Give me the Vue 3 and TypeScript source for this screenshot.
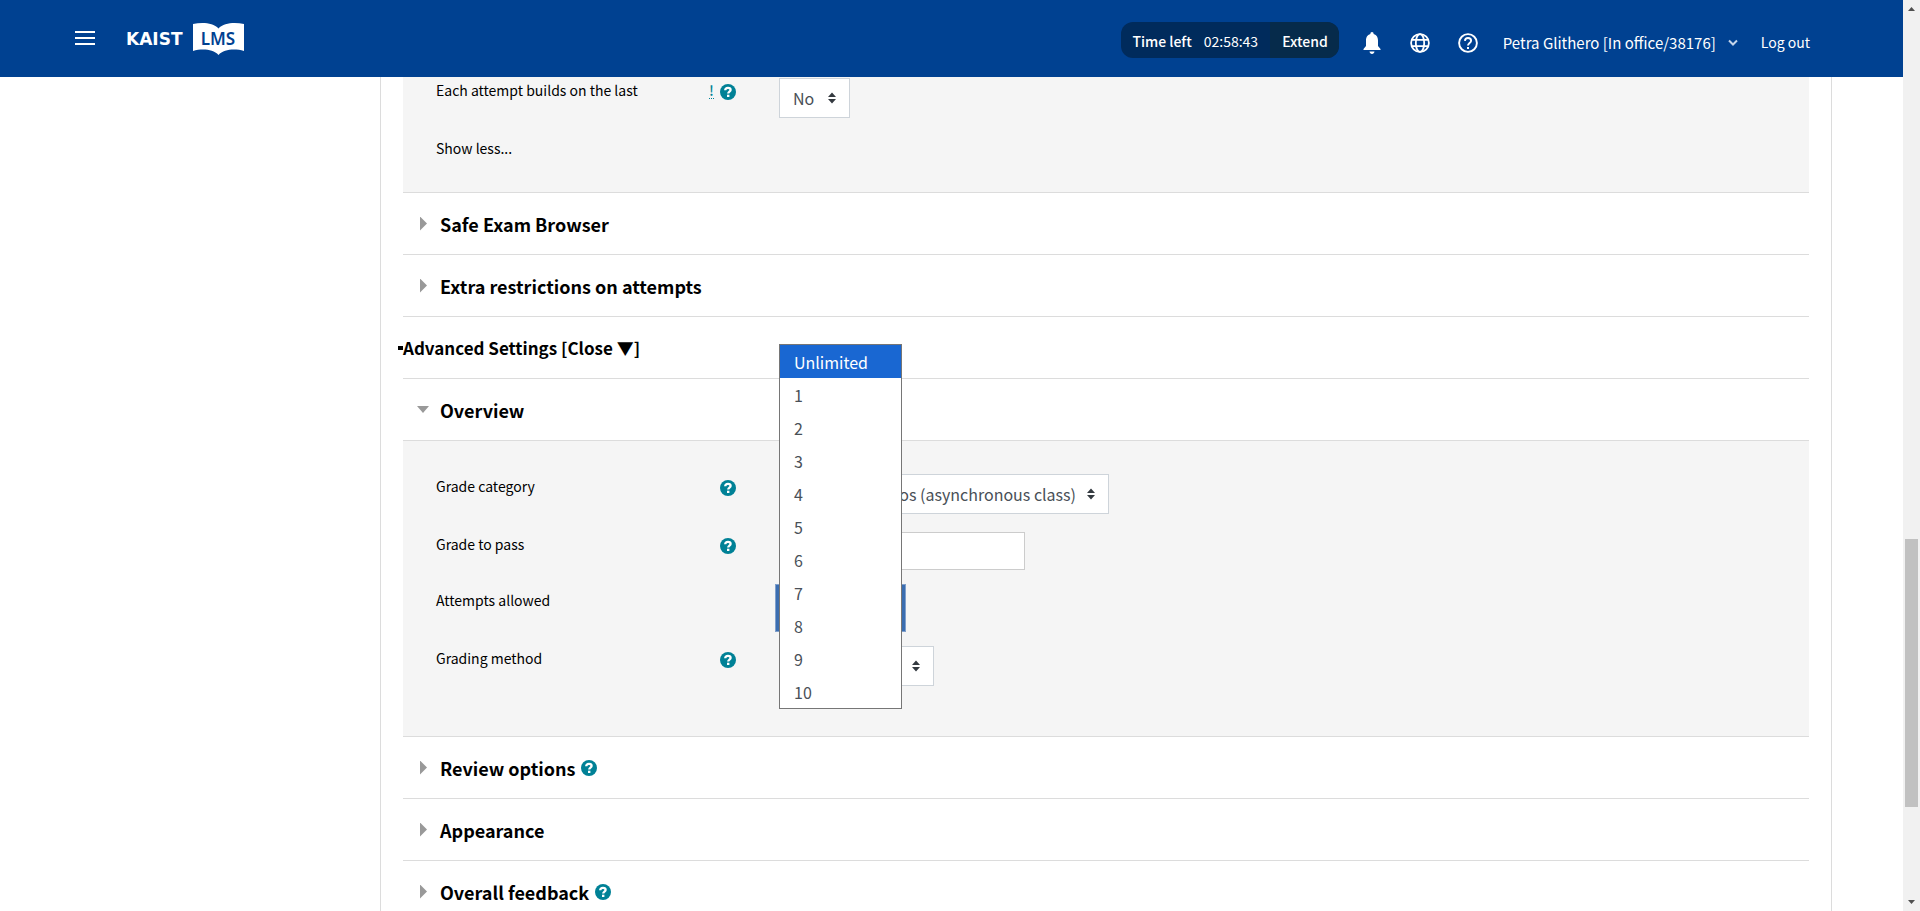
<script setup lang="ts">
import { ref } from 'vue'

interface Section {
  title: string
  help: boolean
}

const upperSections: Section[] = [
  { title: 'Safe Exam Browser', help: false },
  { title: 'Extra restrictions on attempts', help: false },
]
const lowerSections: Section[] = [
  { title: 'Review options', help: true },
  { title: 'Appearance', help: false },
  { title: 'Overall feedback', help: true },
]

const attemptOptions: string[] = ['Unlimited', '1', '2', '3', '4', '5', '6', '7', '8', '9', '10']
const attempts = ref('Unlimited')
const menuOpen = ref(true)
const gradeToPass = ref('')

function choose(option: string) {
  attempts.value = option
  menuOpen.value = false
}
</script>

<template>
  <div class="page">
    <svg class="symbols" aria-hidden="true">
      <symbol id="i-help" viewBox="0 0 16 16">
        <circle cx="8" cy="8" r="8" fill="#008196" />
        <path d="M5.200 6.300C5.300 4.600 6.500 3.800 8 3.800C9.600 3.800 10.600 4.700 10.600 5.900C10.600 7.600 8.200 7.700 8.200 9.600" fill="none" stroke="#fff" stroke-width="2.300" />
        <rect x="7" y="10.700" width="2.400" height="2.300" fill="#fff" />
      </symbol>
      <symbol id="i-sort" viewBox="0 0 10 12">
        <path d="M1 5L5 0.500L9 5ZM1 7L5 11.500L9 7Z" fill="#343a40" />
      </symbol>
    </svg>

    <div class="main">
      <header class="topbar">
        <button class="icon-btn menu" type="button" aria-label="Menu">
          <svg width="20" height="14" viewBox="0 0 20 14"><path d="M0 1H20M0 7H20M0 13H20" stroke="#fff" stroke-width="2" /></svg>
        </button>
        <a class="logo" href="#">
          <span class="logo-name">KAIST</span>
          <span class="logo-book">
            <svg width="51" height="32" viewBox="0 0 51 32" aria-hidden="true">
              <path d="M0 1C9 -0.800 20 -0.500 25.500 5.500C31 -0.500 42 -0.800 51 1V28C42 25.500 31 26 25.500 32C20 26 9 25.500 0 28Z" fill="#fff" />
            </svg>
            <span class="logo-lms">LMS</span>
          </span>
        </a>

        <div class="timer">
          <span class="timer-info"><span>Time left</span><time class="clock">02:58:43</time></span>
          <button class="extend" type="button">Extend</button>
        </div>
        <nav class="tools">
          <button class="icon-btn" type="button" aria-label="Notifications">
            <svg width="20" height="24" viewBox="0 0 20 24"><path d="M10 1C11 1 11.600 1.700 11.600 2.900C14.900 3.700 16 6.600 16 9.500V15L18.500 18V19H1.500V18L4 15V9.500C4 6.600 5.100 3.700 8.400 2.900C8.400 1.700 9 1 10 1ZM7.500 20.500H12.500C12.300 22 11.300 23 10 23C8.700 23 7.700 22 7.500 20.500Z" fill="#fff" /></svg>
          </button>
          <button class="icon-btn" type="button" aria-label="Language">
            <svg width="20" height="20" viewBox="0 0 20 20"><g fill="none" stroke="#fff" stroke-width="1.800"><circle cx="10" cy="10" r="8.900" /><ellipse cx="10" cy="10" rx="4.200" ry="8.900" /><path d="M1.800 6.900H18.200M1.800 13.100H18.200" /></g></svg>
          </button>
          <button class="icon-btn" type="button" aria-label="Help">
            <svg width="20" height="20" viewBox="0 0 20 20"><g fill="none" stroke="#fff" stroke-width="1.900"><circle cx="10" cy="10" r="8.900" /><path d="M6.900 7.900C7 6.100 8.300 5 10 5C11.800 5 13.100 6.100 13.100 7.700C13.100 9.900 10 10.200 10 12.600" /></g><rect x="9" y="14" width="2" height="2" fill="#fff" /></svg>
          </button>
        </nav>
        <button class="user" type="button">
          Petra Glithero [In office/38176]
          <svg width="10" height="8" viewBox="0 0 10 8" aria-hidden="true"><path d="M1 1.500L5 5.500L9 1.500" fill="none" stroke="#c5d5ea" stroke-width="2" /></svg>
        </button>
        <a class="logout" href="#">Log out</a>
      </header>

      <main class="sheet">
        <div class="panel first">
          <div class="row">
            <label class="label" for="builds">Each attempt builds on the last</label>
            <span class="marks">
              <abbr class="advanced" title="Advanced element">!</abbr>
              <button class="help" type="button" aria-label="Help with each attempt builds on the last"><svg><use href="#i-help" /></svg></button>
            </span>
            <span class="picker w-no">
              <select id="builds"><option>No</option><option>Yes</option></select>
              <svg class="sort"><use href="#i-sort" /></svg>
            </span>
          </div>
          <a class="less" href="#">Show less...</a>
        </div>

        <h3 v-for="s in upperSections" :key="s.title" class="section">
          <button class="toggle" type="button" aria-expanded="false"><span class="arrow"></span>{{ s.title }}</button>
        </h3>
        <h3 class="section advanced-head">
          <button class="toggle" type="button"><span class="bullet"></span>Advanced Settings [Close ▼]</button>
        </h3>
        <h3 class="section">
          <button class="toggle" type="button" aria-expanded="true"><span class="arrow open"></span>Overview</button>
        </h3>

        <div class="panel overview">
          <div class="row">
            <label class="label" for="category">Grade category</label>
            <span class="marks"><button class="help" type="button" aria-label="Help with grade category"><svg><use href="#i-help" /></svg></button></span>
            <span class="picker w-category">
              <select id="category"><option>Lecture videos (asynchronous class)</option></select>
              <svg class="sort"><use href="#i-sort" /></svg>
            </span>
          </div>
          <div class="row">
            <label class="label" for="pass">Grade to pass</label>
            <span class="marks"><button class="help" type="button" aria-label="Help with grade to pass"><svg><use href="#i-help" /></svg></button></span>
            <input id="pass" v-model="gradeToPass" class="text" type="text" />
          </div>
          <div class="row">
            <label class="label" for="attempts">Attempts allowed</label>
            <span class="marks"></span>
            <span class="picker w-attempts focused">
              <select id="attempts" v-model="attempts">
                <option v-for="o in attemptOptions" :key="o">{{ o }}</option>
              </select>
              <svg class="sort"><use href="#i-sort" /></svg>
              <span v-if="menuOpen" class="menu-list" role="listbox" aria-label="Attempts allowed">
                <button
                  v-for="o in attemptOptions"
                  :key="o"
                  type="button"
                  role="option"
                  class="menu-item"
                  :class="{ active: o === attempts }"
                  :aria-selected="o === attempts"
                  @click="choose(o)"
                >{{ o }}</button>
              </span>
            </span>
          </div>
          <div class="row">
            <label class="label" for="method">Grading method</label>
            <span class="marks"><button class="help" type="button" aria-label="Help with grading method"><svg><use href="#i-help" /></svg></button></span>
            <span class="picker w-method">
              <select id="method"><option>Highest grade</option></select>
              <svg class="sort"><use href="#i-sort" /></svg>
            </span>
          </div>
        </div>

        <h3 v-for="s in lowerSections" :key="s.title" class="section">
          <button class="toggle" type="button" aria-expanded="false"><span class="arrow"></span>{{ s.title }}</button>
          <button v-if="s.help" class="help" type="button" :aria-label="'Help with ' + s.title"><svg><use href="#i-help" /></svg></button>
        </h3>
      </main>
    </div>

    <div class="scrollbar" aria-hidden="true">
      <svg width="7" height="4" viewBox="0 0 7 4"><path d="M0 4L3.500 0L7 4Z" fill="#505050" /></svg>
      <div class="track"><div class="thumb"></div></div>
      <svg width="7" height="4" viewBox="0 0 7 4"><path d="M0 0L3.500 4L7 0Z" fill="#505050" /></svg>
    </div>
  </div>
</template>

<style>
body {
  overflow: hidden;
  background: #fff;
}
</style>

<style scoped>
.page {
  display: flex;
  height: 100vh;
  overflow: hidden;
  font-family: "Noto Sans CJK KR", "Noto Sans", sans-serif;
  font-size: 14px;
  line-height: 24px;
  color: #000;
}
.page *,
.page *::before {
  box-sizing: border-box;
}
.symbols {
  display: none;
}
svg {
  display: block;
  flex: none;
}
button {
  margin: 0;
  padding: 0;
  border: 0;
  background: none;
  color: inherit;
  font: inherit;
  cursor: pointer;
}
a {
  color: inherit;
  text-decoration: none;
}
.main {
  flex: 1;
  min-width: 0;
  display: flex;
  flex-direction: column;
}

/* Top bar */
.topbar {
  flex: none;
  display: flex;
  align-items: center;
  height: 77px;
  padding: 8px 93px 0 75px;
  background: #004191;
  color: #fff;
  white-space: nowrap;
}
.menu {
  margin-bottom: 9px;
}
.logo {
  display: flex;
  align-items: center;
  gap: 10px;
  margin: 0 auto 8px 31px;
}
.logo-name {
  font: bold 17px/24px "DejaVu Sans", sans-serif;
}
.logo-book {
  display: grid;
  place-items: center;
}
.logo-book > * {
  grid-area: 1 / 1;
}
.logo-lms {
  color: #004191;
  font: 600 17px/24px "Noto Sans", sans-serif;
}
.timer {
  display: flex;
  height: 36px;
  margin-bottom: 5px;
  border-radius: 12px;
  overflow: hidden;
  background: #002b5c;
  font-weight: 500;
}
.timer-info {
  display: flex;
  align-items: center;
  gap: 12px;
  padding: 2px 12px 0 11px;
}
.clock {
  font-weight: 400;
}
.extend {
  padding: 2px 11px 0 12px;
  background: #062b4b;
}
.tools {
  display: flex;
  align-items: center;
  gap: 28px;
  margin: 0 25px 0 23px;
}
.user {
  display: flex;
  align-items: center;
  gap: 12px;
  margin-right: 23px;
  font-size: 15px;
}
.logout {
  margin-bottom: 2px;
}

/* Sheet */
.sheet {
  flex: 1;
  min-height: 0;
  margin: 0 71px 0 380px;
  padding: 0 22px;
  border: solid #dcdcdc;
  border-width: 0 1px;
}
.panel {
  display: flex;
  flex-direction: column;
  padding: 33px 33px 50px;
  gap: 18px;
  background: #f5f5f5;
  border-bottom: 1px solid #dcdcdc;
}
.first {
  padding: 1px 33px 32px;
}
.row {
  display: flex;
  align-items: flex-start;
}
.label {
  width: 259px;
}
.marks {
  display: flex;
  justify-content: flex-end;
  gap: 6px;
  width: 41px;
  margin-right: 43px;
  padding-top: 2px;
}
.advanced {
  width: 5px;
  height: 16px;
  margin-top: 3px;
  border-bottom: 1px dotted #008196;
  color: #008196;
  font-weight: 500;
  line-height: 14px;
  text-align: center;
  text-decoration: none;
}
.help {
  padding: 4px 0;
}
.help svg {
  width: 16px;
  height: 16px;
}
.less {
  align-self: flex-start;
}
.picker {
  position: relative;
  height: 40px;
}
.picker select {
  appearance: none;
  width: 100%;
  height: 100%;
  padding: 0 32px 0 13px;
  border: 1px solid #ced4da;
  border-radius: 0;
  background: #fff;
  color: #495057;
  font: inherit;
  font-size: 16px;
  outline: none;
}
.w-no { width: 71px; }
.w-category { width: 330px; }
.w-category select { text-align-last: right; }
.w-attempts { width: 123px; }
.w-method { width: 155px; }
.sort {
  position: absolute;
  top: 14px;
  right: 13px;
  width: 10px;
  height: 12px;
  pointer-events: none;
}
.focused select {
  border-color: #3a6db0;
  box-shadow: 0 0 0 3px #3a6db0, 0 0 0 4px #7f9fcb;
}
.text {
  width: 246px;
  height: 38px;
  padding: 0 12px;
  border: 1px solid #ccc;
  background: #fff;
  font: inherit;
}

/* Open option list */
.menu-list {
  position: absolute;
  z-index: 2;
  left: 0;
  top: -244px;
  width: 100%;
  border: 1px solid #767676;
  background: #fff;
}
.menu-item {
  display: block;
  width: 100%;
  height: 33px;
  padding: 0 14px;
  color: #495057;
  font-size: 16px;
  text-align: left;
}
.menu-item.active {
  background: #1967d2;
  color: #fff;
}

/* Collapsible headings */
.section {
  display: flex;
  align-items: center;
  height: 62px;
  margin: 0;
  padding-left: 17px;
  border-bottom: 1px solid #dcdcdc;
  font-size: 18px;
  font-weight: 700;
  gap: 6px;
}
.toggle {
  display: flex;
  align-items: center;
}
.arrow {
  width: 20px;
}
.arrow::before {
  content: "";
  display: block;
  width: 7px;
  height: 14px;
  background: #999;
  clip-path: polygon(0 0, 100% 50%, 0 100%);
}
.arrow.open::before {
  width: 12px;
  height: 7px;
  margin-left: -3px;
  clip-path: polygon(0 0, 100% 0, 50% 100%);
}
.advanced-head {
  padding-left: 0;
  font-size: 17px;
}
.bullet {
  width: 5px;
  height: 4px;
  margin-left: -5px;
  background: #000;
}

/* Scrollbar */
.scrollbar {
  flex: none;
  display: flex;
  flex-direction: column;
  align-items: center;
  width: 17px;
  padding: 7px 0;
  background: #f1f1f1;
}
.track {
  flex: 1;
  display: flex;
  flex-direction: column;
  width: 13px;
  padding-top: 528px;
}
.thumb {
  height: 268px;
  background: #c1c1c1;
}
</style>
